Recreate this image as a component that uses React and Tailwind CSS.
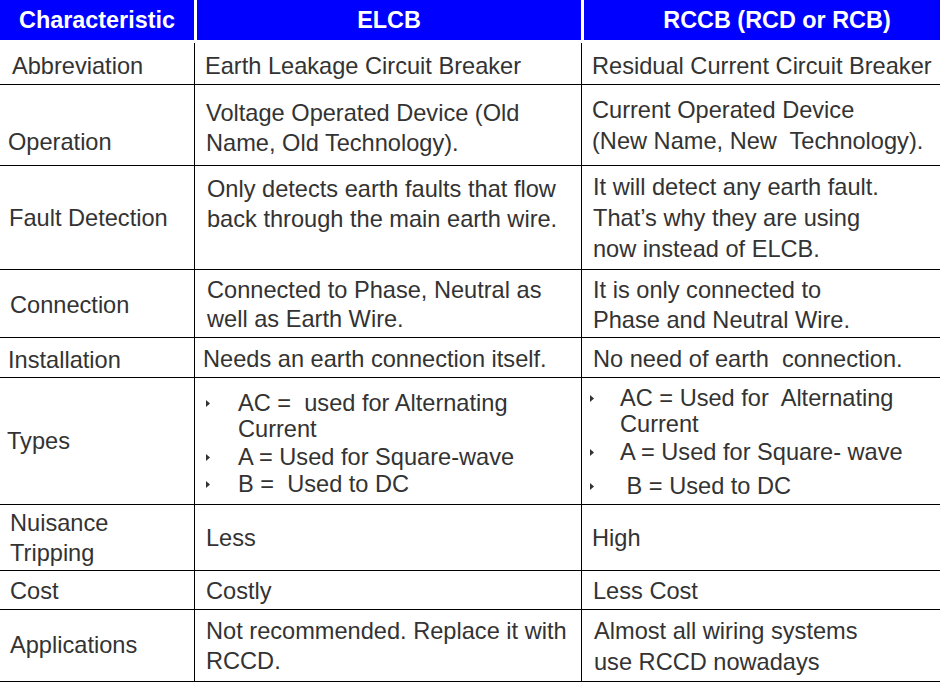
import React from 'react';

const Bullet = () => (
  <svg width="4" height="7" viewBox="0 0 4 7" className="block">
    <polygon points="0,0 4,3.5 0,7" fill="#333333" />
  </svg>
);

const Row = ({ h, children }) => (
  <div className={`grid grid-cols-[195px_387px_388px] border-b border-black ${h}`}>{children}</div>
);

const App = () => {
  return (
    <div className="w-[940px] h-[685px] overflow-hidden bg-white text-[#333333] font-['Liberation_Sans',Arial,sans-serif] text-[23.6px]">
      <div className="w-[970px]">
        {/* Header */}
        <div className="flex gap-[3px] h-[40px] bg-white text-white font-bold text-[23.4px] leading-[40px]">
          <div className="w-[194px] bg-[#0000ff] text-center">Characteristic</div>
          <div className="w-[384px] bg-[#0000ff] text-center">ELCB</div>
          <div className="w-[386px] bg-[#0000ff] text-center">RCCB (RCD or RCB)</div>
        </div>
        <div className="h-[3px]" />

        {/* Abbreviation */}
        <Row h="h-[42px]">
          <div className="border-r border-black pl-[12px] pt-[8px] leading-[30px]">Abbreviation</div>
          <div className="border-r border-black pl-[10px] pt-[8px] leading-[30px]">Earth Leakage Circuit Breaker</div>
          <div className="pl-[10px] pt-[8px] leading-[30px] whitespace-pre">Residual Current Circuit Breaker</div>
        </Row>

        {/* Operation */}
        <Row h="h-[81px]">
          <div className="border-r border-black pl-[8px] pt-[42px] leading-[30px]">Operation</div>
          <div className="border-r border-black pl-[11px] pt-[13px] leading-[30px]">
            Voltage Operated Device (Old<br />Name, Old Technology).
          </div>
          <div className="pl-[10px] pt-[10px] leading-[31px] whitespace-pre">
            Current Operated Device<br />(New Name, New  Technology).
          </div>
        </Row>

        {/* Fault Detection */}
        <Row h="h-[104px]">
          <div className="border-r border-black pl-[9px] pt-[37px] leading-[30px]">Fault Detection</div>
          <div className="border-r border-black pl-[12px] pt-[8px] leading-[30px] whitespace-pre">
            Only detects earth faults that flow<br />back through the main earth wire.
          </div>
          <div className="pl-[11px] pt-[6px] leading-[31px] whitespace-pre">
            It will detect any earth fault.<br />That’s why they are using<br />now instead of ELCB.
          </div>
        </Row>

        {/* Connection */}
        <Row h="h-[68px]">
          <div className="border-r border-black pl-[10px] pt-[20px] leading-[30px]">Connection</div>
          <div className="border-r border-black pl-[12px] pt-[6px] leading-[29px] whitespace-pre">
            Connected to Phase, Neutral as<br />well as Earth Wire.
          </div>
          <div className="pl-[11px] pt-[5px] leading-[30px] whitespace-pre">
            It is only connected to<br />Phase and Neutral Wire.
          </div>
        </Row>

        {/* Installation */}
        <Row h="h-[40px]">
          <div className="border-r border-black pl-[8px] pt-[7px] leading-[30px]">Installation</div>
          <div className="border-r border-black pl-[8px] pt-[6px] leading-[30px] whitespace-pre">Needs an earth connection itself.</div>
          <div className="pl-[11px] pt-[6px] leading-[30px] whitespace-pre">No need of earth  connection.</div>
        </Row>

        {/* Types */}
        <Row h="h-[127px]">
          <div className="border-r border-black pl-[7px] pt-[48px] leading-[30px]">Types</div>
          <div className="border-r border-black pl-[11px] pt-[12px] leading-[26px]">
            <div className="flex">
              <div className="w-[32px] h-[26px] flex items-center"><Bullet /></div>
              <div className="whitespace-pre">AC =  used for Alternating<br />Current</div>
            </div>
            <div className="flex mt-[2px]">
              <div className="w-[32px] h-[26px] flex items-center"><Bullet /></div>
              <div className="whitespace-pre">A = Used for Square-wave</div>
            </div>
            <div className="flex mt-[1px]">
              <div className="w-[32px] h-[26px] flex items-center"><Bullet /></div>
              <div className="whitespace-pre">B =  Used to DC</div>
            </div>
          </div>
          <div className="pl-[8px] pt-[7px] leading-[26px]">
            <div className="flex">
              <div className="w-[30px] h-[26px] flex items-center"><Bullet /></div>
              <div className="whitespace-pre">AC = Used for  Alternating<br />Current</div>
            </div>
            <div className="flex mt-[2px]">
              <div className="w-[30px] h-[26px] flex items-center"><Bullet /></div>
              <div className="whitespace-pre">A = Used for Square- wave</div>
            </div>
            <div className="flex mt-[8px]">
              <div className="w-[30px] h-[26px] flex items-center"><Bullet /></div>
              <div className="whitespace-pre"> B = Used to DC</div>
            </div>
          </div>
        </Row>

        {/* Nuisance Tripping */}
        <Row h="h-[66px]">
          <div className="border-r border-black pl-[10px] pt-[3px] leading-[30px]">
            Nuisance<br />Tripping
          </div>
          <div className="border-r border-black pl-[11px] pt-[18px] leading-[30px]">Less</div>
          <div className="pl-[10px] pt-[18px] leading-[30px]">High</div>
        </Row>

        {/* Cost */}
        <Row h="h-[39px]">
          <div className="border-r border-black pl-[10px] pt-[5px] leading-[30px]">Cost</div>
          <div className="border-r border-black pl-[11px] pt-[5px] leading-[30px]">Costly</div>
          <div className="pl-[11px] pt-[5px] leading-[30px]">Less Cost</div>
        </Row>

        {/* Applications */}
        <Row h="h-[72px]">
          <div className="border-r border-black pl-[10px] pt-[20px] leading-[30px]">Applications</div>
          <div className="border-r border-black pl-[11px] pt-[6px] leading-[30px] whitespace-pre">
            Not recommended. Replace it with<br />RCCD.
          </div>
          <div className="pl-[12px] pt-[6px] leading-[31px] whitespace-pre">
            Almost all wiring systems<br />use RCCD nowadays
          </div>
        </Row>
      </div>
    </div>
  );
};

export default App;
